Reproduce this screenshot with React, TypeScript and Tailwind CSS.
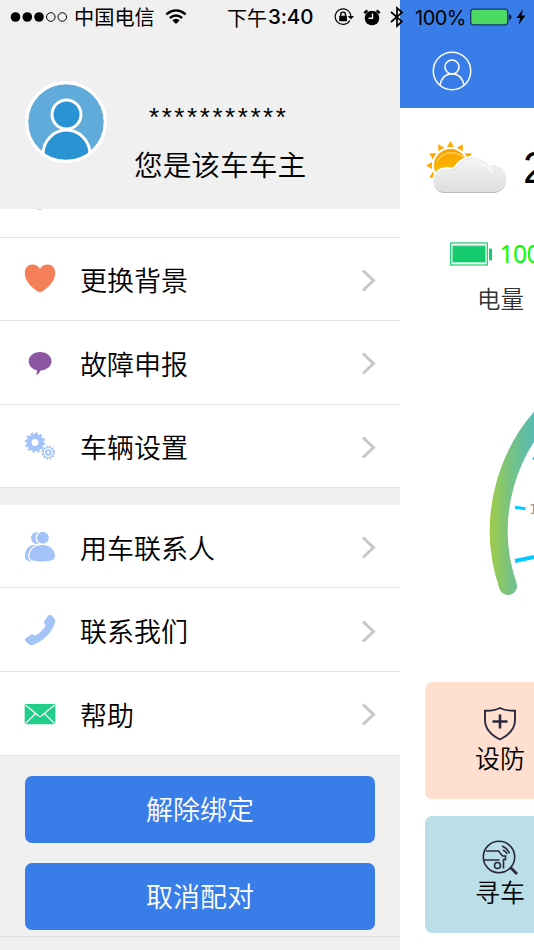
import React from "react";

const cjk = "font-['Noto_Sans_CJK_SC',sans-serif] font-[350]";

function Person() {
  return (
    <svg width="84" height="84" viewBox="0 0 84 84" className="shrink-0">
      <defs>
        <clipPath id="avatar"><circle cx="42" cy="42" r="38.5" /></clipPath>
      </defs>
      <circle cx="42" cy="42" r="41" fill="#fff" />
      <circle cx="42" cy="42" r="38" fill="#60abda" />
      <g clipPath="url(#avatar)" fill="#2993d4" stroke="#fff" strokeWidth="3">
        <ellipse cx="42.500" cy="74.500" rx="23.500" ry="24.500" />
        <circle cx="42.500" cy="34.500" r="14.500" />
      </g>
      <circle cx="42" cy="42" r="39.3" fill="none" stroke="#fff" strokeWidth="3" />
    </svg>
  );
}

function Heart() {
  return (
    <svg width="32" height="32" viewBox="0 0 32 32">
      <path fill="#f47f58" d="M16 29.500C10 26.500 .8 19.500 .8 10C.8 4.500 4 1.500 8.500 1.500C12 1.500 14.500 3 16 6.200C17.500 3 20 1.500 23.500 1.500C28 1.500 31.200 4.500 31.200 10C31.200 19.500 22 26.500 16 29.500Z" />
    </svg>
  );
}

function Bubble() {
  return (
    <svg width="32" height="32" viewBox="0 0 32 32">
      <path fill="#8b57a2" d="M16 5C22.500 5 27.500 9 27.500 14.300C27.500 19.500 22.500 23.300 16.500 23.500C15.500 26 13.500 27.500 12 28C12.800 26.500 13.200 24.800 12.800 23.200C8 22.300 4.700 18.700 4.700 14.300C4.700 9 9.500 5 16 5Z" />
    </svg>
  );
}

function Gears() {
  return (
    <svg width="32" height="32" viewBox="0 0 32 32" fill="none" stroke="#a2c2f8">
      <circle cx="11" cy="12.500" r="5.900" strokeWidth="5" />
      <circle cx="11" cy="12.500" r="8.700" strokeWidth="3" strokeDasharray="2.500 2.055" />
      <circle cx="24.300" cy="22.500" r="5" strokeWidth="1.100" />
      <circle cx="24.300" cy="22.500" r="6.200" strokeWidth="1.600" strokeDasharray="1.700 1.546" />
      <circle cx="24.300" cy="22.500" r="2.300" strokeWidth="1.800" />
    </svg>
  );
}

function Contacts() {
  return (
    <svg width="32" height="32" viewBox="0 0 32 32" fill="#a2c2f8">
      <circle cx="13" cy="7" r="6" />
      <path d="M.8 25.500C.8 18.500 5 13.800 12 13.800L16 30.500H8C3 30 .8 28.500 .8 25.500Z" />
      <g stroke="#fff" strokeWidth="1.200">
        <circle cx="18.800" cy="6.700" r="6.600" />
        <path d="M4.800 25.500C5 18.500 10 13.300 18.500 13.300C27 13.300 31.600 19.300 31.600 25.500C31.600 29.500 27 31 18.500 31C9 31 4.600 29.500 4.800 25.500Z" />
      </g>
    </svg>
  );
}

function Phone() {
  return (
    <svg width="32" height="32" viewBox="0 0 32 32">
      <path fill="#a2c2f8" d="M24.200 1.500C25.200 .6 26.500 .5 27.500 1.400L30.500 4.400C31.500 5.700 31.300 8 30.300 10.500C27.500 18.500 19 27 10.500 30.200C8 31.300 6.300 31.400 5 30.200L1.300 27C.5 26 .8 25 1.800 24.200L7.200 20.600C8.300 20 9.200 20.200 10 21L11 21.800C15.500 19.500 19.500 15.500 21.700 11.300L20.600 9.800C19.800 9 19.800 8 20.400 7Z" />
    </svg>
  );
}

function Mail() {
  return (
    <svg width="32" height="32" viewBox="0 0 32 32">
      <rect x=".7" y="6" width="30.600" height="20.200" rx="1.200" fill="#1fce88" />
      <path d="M1.500 7L13.500 17Q16 20.200 18.500 17L30.500 7M1.500 25.500L11.500 15.500M30.500 25.500L20.500 15.500" fill="none" stroke="#fff" strokeWidth="1.200" />
    </svg>
  );
}

function Row({ icon, label }: { icon: React.ReactNode; label: string }) {
  return (
    <div className="flex h-[83.600px] shrink-0 items-center border-b-[1.500px] border-[#e1e1e3] bg-white pl-6 pr-6">
      <span className="w-8 shrink-0 pt-px">{icon}</span>
      <span className="ml-6 flex-1 whitespace-nowrap pt-[3px] text-[27px] leading-10 text-black">{label}</span>
      <svg width="16" height="26" viewBox="0 0 16 26" fill="none" stroke="#c7c7cc" strokeWidth="3">
        <path d="M3 4.500L13.500 14.500L3 24.500" />
      </svg>
    </div>
  );
}

function ActionButton({ label }: { label: string }) {
  return (
    <button className="flex h-[67px] w-[350px] shrink-0 items-center justify-center rounded-[7px] bg-[#397ee8] text-[27px] leading-10 text-white">
      {label}
    </button>
  );
}

function StatusBar() {
  return (
    <div className="absolute left-0 top-0 z-10 flex h-[34px] w-[534px] items-center text-black">
      <svg width="58" height="12" viewBox="0 0 58 12" className="ml-[10px] shrink-0">
        <circle cx="5.500" cy="6" r="4.800" /><circle cx="17.300" cy="6" r="4.800" /><circle cx="29" cy="6" r="4.800" />
        <circle cx="40.800" cy="6" r="4.300" fill="none" stroke="#000" /><circle cx="52.300" cy="6" r="4.300" fill="none" stroke="#000" />
      </svg>
      <span className="ml-[6px] w-[82px] shrink-0 whitespace-nowrap pt-px text-[20.200px] font-normal">中国电信</span>
      <svg width="22" height="16" viewBox="0 0 22 16" fill="none" stroke="#000" strokeWidth="2.300" className="ml-[9px] shrink-0">
        <path d="M1.300 5.300Q11 -2.500 20.700 5.300" /><path d="M4.800 9Q11 3.900 17.200 9" />
        <path d="M7.300 11.300Q11 8.200 14.700 11.300L11 15Z" fill="#000" stroke="none" />
      </svg>
      <span className="ml-10 flex w-[88px] shrink-0 items-center whitespace-nowrap pt-px text-[20px] font-normal">
        下午<span className="ml-px font-['Inter',sans-serif] text-[20.500px] font-medium tracking-[-0.1px]">3:40</span>
      </span>
      <svg width="20" height="18" viewBox="0 0 20 18" className="ml-[19px] shrink-0">
        <path d="M15.800 12.500A7.800 7.800 0 1 1 16.800 8" fill="none" stroke="#000" strokeWidth="1.200" />
        <path d="M13.800 8H20L17 11.500Z" />
        <rect x="5.200" y="7.700" width="7.800" height="5.500" rx=".6" />
        <path d="M6.700 8V6.500A2.400 2.400 0 0 1 11.500 6.500V8" fill="none" stroke="#000" strokeWidth="1.400" />
      </svg>
      <svg width="18" height="17" viewBox="0 0 18 17" className="ml-[9px] shrink-0">
        <circle cx="9" cy="9" r="7.300" />
        <path d="M1.300 4.200L4.300 1.300M16.700 4.200L13.700 1.300" stroke="#000" strokeWidth="2.500" />
        <path d="M9.500 4.500V9.300H5.500" fill="none" stroke="#f0f0f0" strokeWidth="1.400" />
      </svg>
      <svg width="14" height="22" viewBox="0 0 14 22" fill="none" stroke="#000" strokeWidth="1.700" className="ml-[9px] shrink-0">
        <path d="M1 6L12 15.500L7 20V2L12 6.500L1 16" />
      </svg>
      <span className="ml-[11px] w-[55px] shrink-0 whitespace-nowrap pt-px font-['Inter',sans-serif] text-[20px] font-normal tracking-[-0.500px]">100%</span>
      <svg width="42" height="18" viewBox="0 0 42 18" className="shrink-0">
        <rect x=".7" y="1.200" width="37" height="15.600" rx="2.500" fill="#4cd964" stroke="#15376c" strokeWidth="1.300" />
        <path d="M39 6Q41.500 6.500 41.500 9T39 12Z" fill="#071b38" />
      </svg>
      <svg width="10" height="16" viewBox="0 0 10 16" className="ml-[4px] shrink-0">
        <path d="M7 0L.5 9H4.300L2.500 16L9.500 6.500H5.500Z" />
      </svg>
    </div>
  );
}

function Weather() {
  return (
    <svg width="84" height="58" viewBox="0 0 84 58" className="shrink-0">
      <defs>
        <linearGradient id="sun" x2="0" y2="1"><stop stopColor="#f7a000" /><stop offset="1" stopColor="#ffc400" /></linearGradient>
        <linearGradient id="cloud" x2="0" y2="1"><stop stopColor="#f5f5f5" /><stop offset="1" stopColor="#dedede" /></linearGradient>
      </defs>
      <g fill="#ffa900">
        {[-120, -90, -60, -30, 0, 30, 60].map((a) => (
          <path key={a} d="M-3.500 -18.500L3.500 -18.500L0 -24.500Z" transform={`translate(25.500 25.500) rotate(${a})`} />
        ))}
      </g>
      <circle cx="25.500" cy="25.500" r="16.300" fill="url(#sun)" stroke="#e99b00" strokeWidth=".5" />
      <path d="M12 21Q22 7 39 17" fill="none" stroke="#ffd04a" strokeWidth="1.500" />
      <path d="M20 54C12 54 8 49 8 42.500C8 32 16 26 26 28.500C28 28.500 29 28.300 30 27C36 18 46 15 54 18C59 19.500 62.500 22 64.500 25C74 22.500 82 29.500 82 39.500C82 49 76 54 68 54Z" fill="#b9b9b9" stroke="#fff" strokeWidth="2" />
      <path d="M20 52C12 52 8.500 48 8.500 42C8.500 33 16 27.500 26 29.500C28 29.500 29.500 29 30.500 28C36 19 46 16 54 19C59 20.500 62.500 23 64.500 26C74 23.500 81.500 30 81.500 39C81.500 47.500 75.500 52 68 52Z" fill="url(#cloud)" />
      <path d="M56 24Q65 26 67.500 33" fill="none" stroke="#fafafa" strokeWidth="1.500" />
    </svg>
  );
}

function Gauge() {
  return (
    <svg width="134" height="220" viewBox="400 390 134 220" className="block shrink-0">
      <defs>
        <linearGradient id="arc" gradientUnits="userSpaceOnUse" x1="490" y1="0" x2="540" y2="0">
          <stop stopColor="#a0cc4a" /><stop offset=".4" stopColor="#77c382" /><stop offset="1" stopColor="#4fb9bf" />
        </linearGradient>
      </defs>
      <path d="M508 586A172 172 0 0 1 560 399" fill="none" stroke="url(#arc)" strokeWidth="18" strokeLinecap="round" />
      <path d="M515 507.300L525.500 508.800M533 458L537 460" stroke="#00ccff" strokeWidth="3" />
      <path d="M515 561L534 557" stroke="#00ccff" strokeWidth="4" />
      <text x="529" y="514" fontSize="14" fill="#999" fontWeight="400" fontFamily="DejaVu Sans">1</text>
    </svg>
  );
}

function Shield() {
  return (
    <svg width="36" height="36" viewBox="0 0 36 36" fill="none" stroke="#292841" strokeWidth="1.900">
      <path d="M18 2Q12 5 3 4.800V14C3 23 9 29 18 33.500C27 29 33 23 33 14V4.800Q24 5 18 2Z" />
      <path d="M18 8.500V22.500M10.500 15.500H25.500" strokeWidth="2.600" />
    </svg>
  );
}

function FindCar() {
  return (
    <svg width="36" height="36" viewBox="0 0 36 36" fill="none" stroke="#292841" strokeWidth="1.600">
      <circle cx="17" cy="17" r="15.700" />
      <path d="M28.500 27.500L35 34" strokeWidth="2.800" />
      <path d="M4 11H16.500L20.500 16H23.500V19.500H21.500V28.500M2 20H17.500M20 6Q25 8 27.500 13.500M21 10Q24 11.500 25 14" />
      <circle cx="15.500" cy="25.500" r="3" />
    </svg>
  );
}

function Tile({ icon, label, color }: { icon: React.ReactNode; label: string; color: string }) {
  return (
    <div className={`flex h-[117px] w-[150px] shrink-0 flex-col items-center rounded-[7px] pt-6 ${color}`}>
      {icon}
      <span className="whitespace-nowrap text-[25px] leading-[30px] text-black">{label}</span>
    </div>
  );
}

export default function App() {
  return (
    <div className={`relative flex h-[950px] w-[534px] overflow-hidden bg-white ${cjk}`}>
      <StatusBar />
      <aside className="flex h-full w-[400px] shrink-0 flex-col bg-[#f0f0f0]">
        <header className="flex h-[209px] shrink-0 pl-6 pt-20">
          <Person />
          <div className="ml-[26px] flex flex-col">
            <span className="ml-[15px] mt-[17px] h-[45px] whitespace-nowrap font-['Liberation_Sans',sans-serif] text-[26px] leading-[40px] tracking-[2.560px]">***********</span>
            <span className="whitespace-nowrap text-[28.700px] leading-[44px] text-black">您是该车车主</span>
          </div>
        </header>
        <div className="flex h-[28.500px] shrink-0 justify-start border-b-[1.500px] border-[#e1e1e3] bg-white pl-[37px]">
          <span className="h-px w-[5px] bg-[#c3d6f7]" />
        </div>
        <Row icon={<Heart />} label="更换背景" />
        <Row icon={<Bubble />} label="故障申报" />
        <Row icon={<Gears />} label="车辆设置" />
        <div className="h-[16.500px] shrink-0" />
        <Row icon={<Contacts />} label="用车联系人" />
        <Row icon={<Phone />} label="联系我们" />
        <Row icon={<Mail />} label="帮助" />
        <div className="flex h-[181px] shrink-0 flex-col items-center gap-5 border-b border-[#dedee0] pt-5">
          <ActionButton label="解除绑定" />
          <ActionButton label="取消配对" />
        </div>
      </aside>
      <main className="flex h-full w-[134px] shrink-0 flex-col overflow-hidden bg-white">
        <div className="h-[107.500px] shrink-0 bg-[#397ee8] pl-8 pt-[51px]">
          <svg width="40" height="40" viewBox="0 0 40 40" fill="none" stroke="#fff" strokeWidth="1.500">
            <circle cx="20" cy="20" r="18.700" /><circle cx="20" cy="16" r="7" />
            <path d="M8 34.200C9.500 27 14 22.800 20 22.800S30.500 27 32 34.200" />
          </svg>
        </div>
        <div className="flex h-[122.500px] shrink-0 items-start pl-[25px] pt-[32px]">
          <Weather />
          <span className="ml-[14px] mt-px whitespace-nowrap font-['Liberation_Sans',sans-serif] text-[44px] leading-[54px] text-black">24</span>
        </div>
        <div className="flex h-[46px] shrink-0 items-center pl-[50px] pt-px">
          <svg width="43" height="26" viewBox="0 0 43 26" className="shrink-0">
            <rect x=".7" y="2" width="36.600" height="22" fill="none" stroke="#16cb6f" strokeWidth="1.200" />
            <path d="M2.500 4.500H35.500V21.500H2.500Z" fill="#16cb6f" />
            <path d="M1.500 4.700H36.500M1.500 21.500H36.500" stroke="#9ff0c7" />
            <rect x="39" y="7.500" width="3" height="12" rx=".7" fill="#16cb6f" />
          </svg>
          <span className="ml-[6.500px] whitespace-nowrap font-['Noto_Sans',sans-serif] text-[24.500px] font-normal leading-8 tracking-[-0.5px] text-[#00ff00]">100%</span>
        </div>
        <div className="h-[114px] shrink-0 whitespace-nowrap pl-[77px] pt-1 text-[23.500px] leading-[36px] text-[#333]">电量</div>
        <Gauge />
        <div className="flex shrink-0 flex-col gap-[17px] pl-[25px] pt-[72px]">
          <Tile icon={<Shield />} label="设防" color="bg-[#ffdfcf]" />
          <Tile icon={<FindCar />} label="寻车" color="bg-[#badfe8]" />
        </div>
      </main>
    </div>
  );
}
